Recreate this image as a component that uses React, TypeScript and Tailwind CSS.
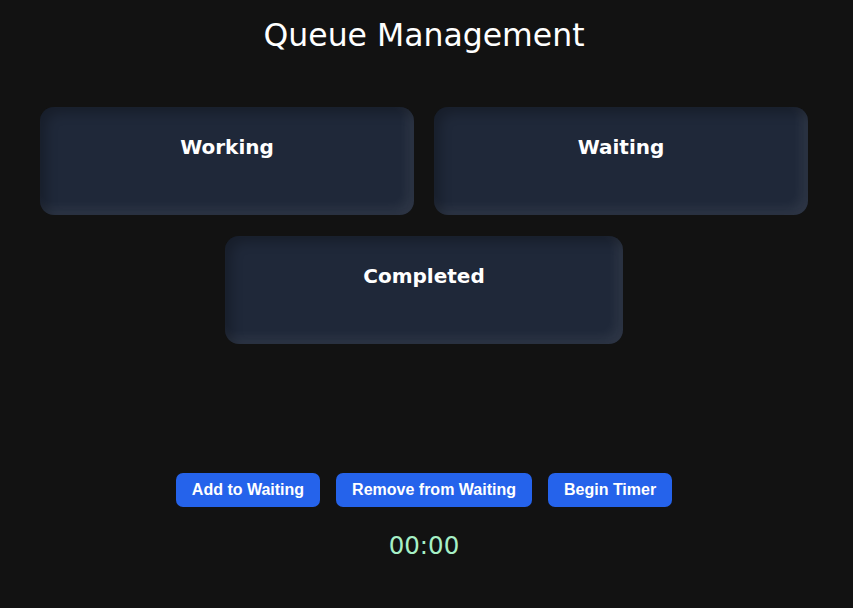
const QueueCard = ({ title, width }: { title: string; width: string }) => (
  <div
    className={`${width} h-[108px] rounded-[14px] bg-[#1f2839] pt-[28px] text-center shadow-[inset_6px_6px_12px_rgba(0,0,0,0.25),inset_-6px_-6px_12px_rgba(255,255,255,0.07)]`}
  >
    <h3 className="text-[20px] font-bold leading-[24px] text-white">{title}</h3>
  </div>
);

const ActionButton = ({ label }: { label: string }) => (
  <button className="h-[34px] rounded-[7px] bg-[#2563eb] px-4 font-['Liberation_Sans',Arial,sans-serif] text-[16px] font-bold text-white">
    {label}
  </button>
);

export default function App() {
  return (
    <div className="min-h-[608px] bg-[#121212] pr-[5px] font-['DejaVu_Sans',Verdana,sans-serif] text-white">
      <h1 className="pt-[16px] text-center text-[31.5px] leading-[38px]">Queue Management</h1>

      <div className="mt-[53px] flex flex-col items-center gap-[21px]">
        <div className="flex gap-[20px]">
          <QueueCard title="Working" width="w-[374px]" />
          <QueueCard title="Waiting" width="w-[374px]" />
        </div>
        <QueueCard title="Completed" width="w-[398px]" />
      </div>

      <div className="mt-[129px] flex justify-center gap-[16px]">
        <ActionButton label="Add to Waiting" />
        <ActionButton label="Remove from Waiting" />
        <ActionButton label="Begin Timer" />
      </div>

      <div className="mt-[24px] text-center text-[24.5px] leading-[30px] text-[#a6f0c6]">00:00</div>
    </div>
  );
}
